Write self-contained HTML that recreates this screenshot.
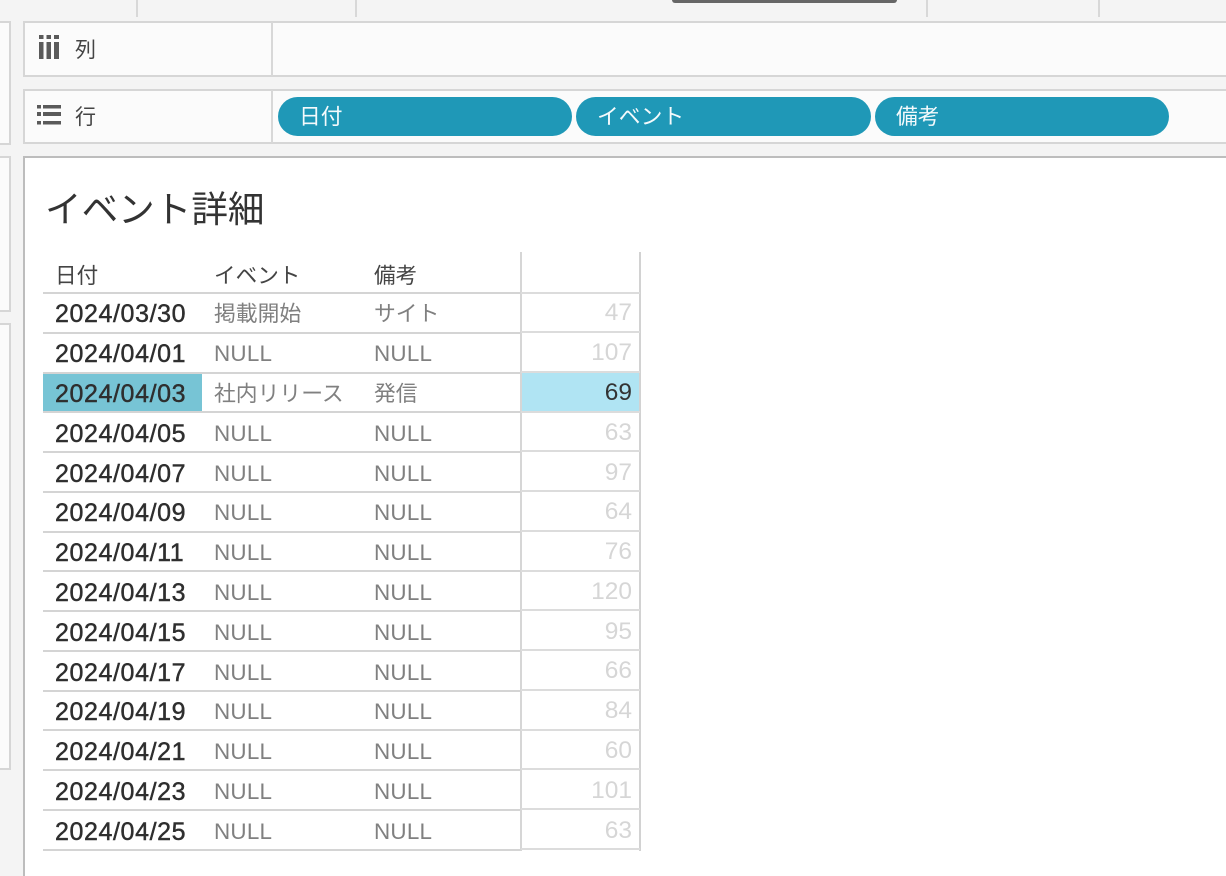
<!DOCTYPE html>
<html lang="ja"><head><meta charset="utf-8"><style>
html,body{margin:0;padding:0;width:1226px;height:876px;overflow:hidden}
body{position:relative;background:#f4f4f4;font-family:"Liberation Sans","Noto Sans CJK JP",sans-serif}
div{position:absolute;box-sizing:border-box;white-space:nowrap}
.box{background:#fbfbfb;border:2px solid #d6d6d6}
.v{width:2px;background:#d8d8d8}
.l{left:43px;width:477px;height:2px;background:#d4d4d4}
.r{left:521px;width:119px;height:2px;background:#dcdcdc}
.t{font-size:21.6px;line-height:32px;height:32px}
.d{left:55px;font-size:25px;letter-spacing:.6px;line-height:32px;color:#2e2e2e;-webkit-text-stroke:.45px #2e2e2e}
.e{left:214px;font-size:22.4px;letter-spacing:.25px;line-height:32px;color:#808080}
.f{left:374px;font-size:22.4px;letter-spacing:.25px;line-height:32px;color:#808080}
.j{font-size:21.8px;letter-spacing:0}
.n{right:594px;font-size:24.5px;line-height:32px;color:#d6d6d6;text-align:right}
.p{height:39px;top:97px;border-radius:20px;background:#1f98b7;color:#f4fafc;font-size:21.8px;line-height:39px;padding-left:21px}
</style></head><body>
<div class="v" style="left:136px;top:0;height:17px"></div>
<div class="v" style="left:355px;top:0;height:17px"></div>
<div class="v" style="left:926px;top:0;height:17px"></div>
<div class="v" style="left:1098px;top:0;height:17px"></div>
<div style="left:672px;top:0;width:225px;height:3px;background:#666;border-radius:0 0 3px 3px"></div>

<div class="box" style="left:-4px;top:21px;width:15px;height:124px"></div>
<div class="box" style="left:-4px;top:156px;width:15px;height:156px"></div>
<div class="box" style="left:-4px;top:323px;width:15px;height:447px"></div>

<div class="box" style="left:23px;top:21px;width:1210px;height:56px"></div>
<div class="v" style="left:271px;top:22px;height:54px"></div>
<div class="box" style="left:23px;top:89px;width:1210px;height:55px"></div>
<div class="v" style="left:271px;top:90px;height:53px"></div>

<svg style="position:absolute;left:38px;top:35px" width="22" height="24"><g fill="#5a5a5a"><rect x="1" y="0" width="4.5" height="4"/><rect x="1" y="7" width="4.5" height="17"/><rect x="8.5" y="0" width="4.5" height="4"/><rect x="8.5" y="7" width="4.5" height="17"/><rect x="16" y="0" width="5" height="4"/><rect x="16" y="7" width="5" height="17"/></g></svg>
<div class="t" style="left:75px;top:35px;color:#444;font-size:21px">列</div>
<svg style="position:absolute;left:37px;top:104px" width="25" height="22"><g fill="#5a5a5a"><rect x="0" y="1" width="4" height="3.5"/><rect x="6" y="1" width="18" height="3.5"/><rect x="0" y="8" width="4" height="4"/><rect x="6" y="8" width="18" height="4"/><rect x="0" y="17" width="4" height="3.5"/><rect x="6" y="17" width="18" height="3.5"/></g></svg>
<div class="t" style="left:75px;top:102px;color:#444;font-size:21px">行</div>

<div class="p" style="left:278px;width:294px">日付</div>
<div class="p" style="left:576px;width:295px">イベント</div>
<div class="p" style="left:875px;width:294px">備考</div>

<div style="left:23px;top:156px;width:1203px;height:720px;background:#fff;border:2px solid #bdbdbd;border-right:0;border-bottom:0"></div>
<div style="left:45px;top:185px;font-size:36.6px;line-height:50px;color:#333">イベント詳細</div>

<div class="t" style="left:55px;top:260px;color:#444">日付</div>
<div class="t" style="left:214px;top:260px;color:#444">イベント</div>
<div class="t" style="left:374px;top:260px;color:#444">備考</div>

<div style="left:43px;top:374px;width:159px;height:38px;background:#77c4d5"></div>
<div style="left:522px;top:373px;width:117px;height:38px;background:#b0e4f3"></div>

<div class="v" style="left:520px;top:252px;height:599px;background:#d6d6d6"></div>
<div class="v" style="left:639px;top:252px;height:599px;background:#d2d2d2"></div>

<div class="l" style="top:292px"></div><div class="r" style="top:292px"></div>
<div class="l" style="top:332px"></div><div class="r" style="top:331px"></div>
<div class="l" style="top:372px"></div><div class="r" style="top:371px"></div>
<div class="l" style="top:411px"></div><div class="r" style="top:411px"></div>
<div class="l" style="top:451px"></div><div class="r" style="top:450px"></div>
<div class="l" style="top:491px"></div><div class="r" style="top:490px"></div>
<div class="l" style="top:531px"></div><div class="r" style="top:530px"></div>
<div class="l" style="top:570px"></div><div class="r" style="top:570px"></div>
<div class="l" style="top:610px"></div><div class="r" style="top:609px"></div>
<div class="l" style="top:650px"></div><div class="r" style="top:649px"></div>
<div class="l" style="top:690px"></div><div class="r" style="top:689px"></div>
<div class="l" style="top:729px"></div><div class="r" style="top:729px"></div>
<div class="l" style="top:769px"></div><div class="r" style="top:768px"></div>
<div class="l" style="top:809px"></div><div class="r" style="top:808px"></div>
<div class="l" style="top:849px"></div><div class="r" style="top:848px"></div>

<div class="d" style="top:298px">2024/03/30</div><div class="e j" style="top:298px">掲載開始</div><div class="f j" style="top:298px">サイト</div><div class="n" style="top:297px">47</div>
<div class="d" style="top:338px">2024/04/01</div><div class="e" style="top:338px">NULL</div><div class="f" style="top:338px">NULL</div><div class="n" style="top:337px">107</div>
<div class="d" style="top:378px">2024/04/03</div><div class="e j" style="top:378px">社内リリース</div><div class="f j" style="top:378px">発信</div><div class="n" style="top:377px;color:#333">69</div>
<div class="d" style="top:418px">2024/04/05</div><div class="e" style="top:418px">NULL</div><div class="f" style="top:418px">NULL</div><div class="n" style="top:417px">63</div>
<div class="d" style="top:458px">2024/04/07</div><div class="e" style="top:458px">NULL</div><div class="f" style="top:458px">NULL</div><div class="n" style="top:457px">97</div>
<div class="d" style="top:497px">2024/04/09</div><div class="e" style="top:497px">NULL</div><div class="f" style="top:497px">NULL</div><div class="n" style="top:496px">64</div>
<div class="d" style="top:537px">2024/04/11</div><div class="e" style="top:537px">NULL</div><div class="f" style="top:537px">NULL</div><div class="n" style="top:536px">76</div>
<div class="d" style="top:577px">2024/04/13</div><div class="e" style="top:577px">NULL</div><div class="f" style="top:577px">NULL</div><div class="n" style="top:576px">120</div>
<div class="d" style="top:617px">2024/04/15</div><div class="e" style="top:617px">NULL</div><div class="f" style="top:617px">NULL</div><div class="n" style="top:616px">95</div>
<div class="d" style="top:657px">2024/04/17</div><div class="e" style="top:657px">NULL</div><div class="f" style="top:657px">NULL</div><div class="n" style="top:655px">66</div>
<div class="d" style="top:696px">2024/04/19</div><div class="e" style="top:696px">NULL</div><div class="f" style="top:696px">NULL</div><div class="n" style="top:695px">84</div>
<div class="d" style="top:736px">2024/04/21</div><div class="e" style="top:736px">NULL</div><div class="f" style="top:736px">NULL</div><div class="n" style="top:735px">60</div>
<div class="d" style="top:776px">2024/04/23</div><div class="e" style="top:776px">NULL</div><div class="f" style="top:776px">NULL</div><div class="n" style="top:775px">101</div>
<div class="d" style="top:816px">2024/04/25</div><div class="e" style="top:816px">NULL</div><div class="f" style="top:816px">NULL</div><div class="n" style="top:815px">63</div>
</body></html>
